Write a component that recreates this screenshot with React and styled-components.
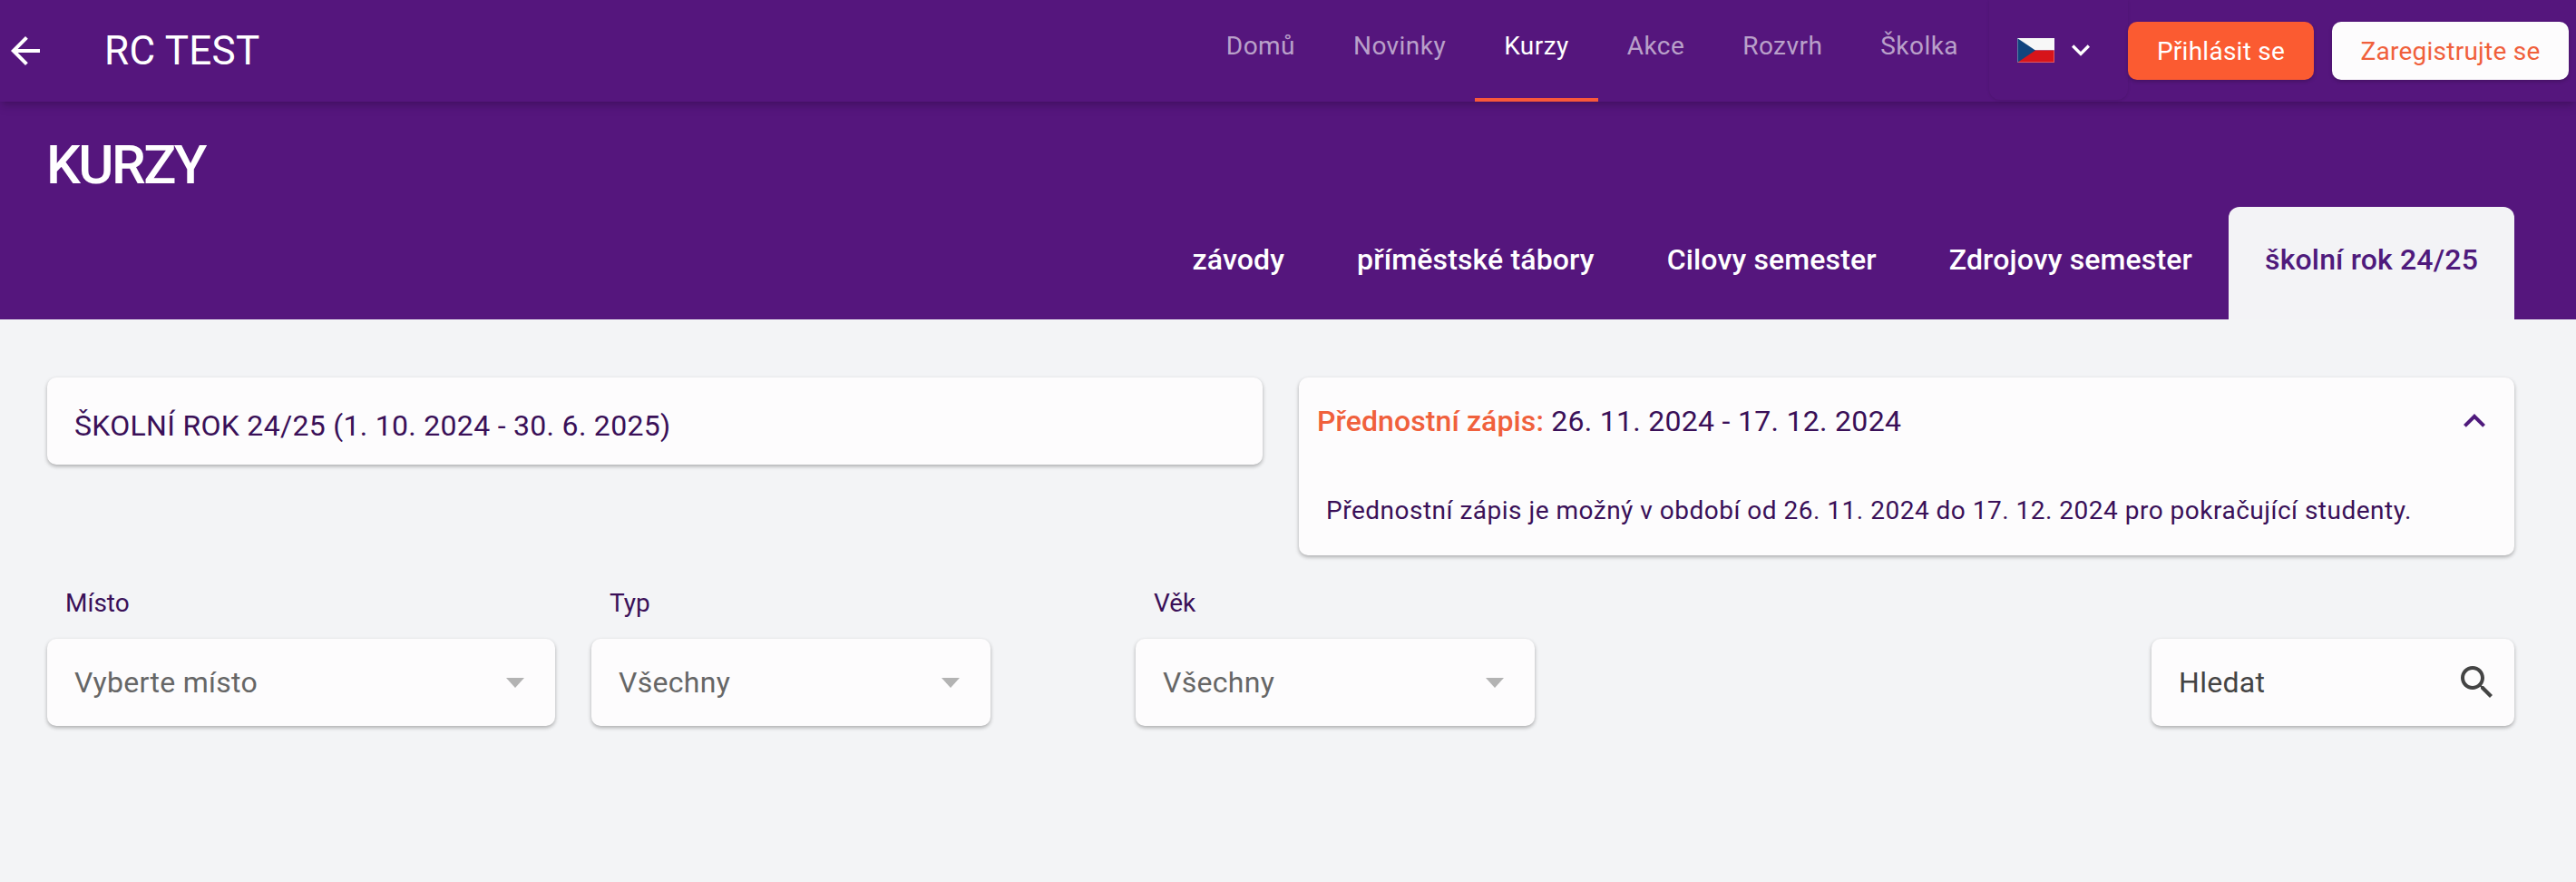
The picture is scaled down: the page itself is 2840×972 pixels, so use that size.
import React from "react";
import styled, { createGlobalStyle } from "styled-components";

const GlobalStyle = createGlobalStyle`
  html, body {
    margin: 0;
    padding: 0;
    background: #f3f4f6;
    font-family: Roboto, "Noto Sans", sans-serif;
  }
  * { box-sizing: border-box; }
`;

const Page = styled.div`
  min-height: 972px;
  background: #f3f4f6;
`;

const AppBar = styled.header`
  position: relative;
  z-index: 2;
  height: 112px;
  display: flex;
  align-items: stretch;
  justify-content: space-between;
  padding: 0 8px 0 4px;
  background: #55167d;
  box-shadow: 0 4px 8px -2px rgba(0, 0, 0, 0.2), 0 8px 10px 0 rgba(0, 0, 0, 0.06);
`;

const Brand = styled.div`
  display: flex;
  align-items: center;
  color: #fff;
`;

const BrandName = styled.span`
  margin-left: 63px;
  font-size: 44px;
  font-weight: 400;
  line-height: 1;
  letter-spacing: 0.3px;
`;

const Icon = styled.svg`
  display: block;
  flex: none;
  width: ${({ $size }) => $size}px;
  height: ${({ $size }) => $size}px;
  fill: ${({ $color }) => $color};
`;

const NavArea = styled.div`
  display: flex;
  align-items: stretch;
`;

const NavLink = styled.a`
  display: flex;
  align-items: center;
  padding: 0 32px 8px;
  font-size: 28px;
  letter-spacing: 0.45px;
  color: ${({ $active }) => ($active ? "#fff" : "rgba(255, 255, 255, 0.6)")};
  border-bottom: 4px solid ${({ $active }) => ($active ? "#f9583a" : "transparent")};
`;

const LangPicker = styled.div`
  width: 153px;
  height: 110px;
  margin-left: 2px;
  display: flex;
  align-items: center;
  padding-left: 31px;
  gap: 9px;
  border-radius: 0 0 12px 12px;
  box-shadow: 0 1px 3px rgba(0, 0, 0, 0.12);
`;

const Flag = styled.svg`
  display: block;
  width: 41px;
  height: 27px;
`;

const Actions = styled.div`
  display: flex;
  align-items: flex-start;
  gap: 20px;
  padding-top: 24px;
`;

const ActionButton = styled.button`
  height: 64px;
  width: ${({ $width }) => $width}px;
  padding: 0;
  border: 0;
  border-radius: 10px;
  font-family: inherit;
  font-size: 28px;
  letter-spacing: 0.25px;
  background: ${({ $filled }) => ($filled ? "#fb5b31" : "#fdfcfd")};
  color: ${({ $filled }) => ($filled ? "#fff" : "#f0603c")};
  box-shadow: 0 2px 4px rgba(0, 0, 0, 0.2);
`;

const Hero = styled.section`
  height: 240px;
  padding: 35px 68px 0 51px;
  display: flex;
  flex-direction: column;
  justify-content: space-between;
  background: #55167d;
`;

const PageTitle = styled.h1`
  margin: 0;
  font-size: 60px;
  font-weight: 500;
  line-height: 70px;
  letter-spacing: -2.6px;
  color: #fff;
`;

const Tabs = styled.nav`
  display: flex;
  justify-content: flex-end;
`;

const Tab = styled.a`
  height: 124px;
  padding: 0 40px 8px;
  display: flex;
  align-items: center;
  font-size: 32px;
  font-weight: 500;
  letter-spacing: 0.15px;
  border-radius: 12px 12px 0 0;
  color: ${({ $active }) => ($active ? "#4f1a7c" : "#fff")};
  background: ${({ $active }) => ($active ? "#f3f3f6" : "transparent")};
`;

const Content = styled.main`
  padding: 64px 68px 0 52px;
`;

const InfoRow = styled.div`
  display: grid;
  grid-template-columns: 1fr 1fr;
  gap: 40px;
  align-items: start;
`;

const Card = styled.div`
  background: #fdfcfd;
  border-radius: 10px;
  box-shadow: 0 2px 4px rgba(0, 0, 0, 0.3);
  color: #3a1058;
`;

const SeasonCard = styled(Card)`
  height: 96px;
  padding: 9px 30px 0;
  display: flex;
  align-items: center;
  font-size: 32px;
  letter-spacing: 0.3px;
`;

const AccordionHead = styled.div`
  height: 96px;
  padding: 0 20px;
  display: flex;
  align-items: center;
  justify-content: space-between;
  font-size: 32px;
  letter-spacing: 0.3px;
`;

const Highlight = styled.span`
  font-weight: 500;
  letter-spacing: 0.1px;
  color: #f0603c;
`;

const AccordionBody = styled.p`
  margin: 0;
  height: 100px;
  padding: 24px 30px 0;
  font-size: 28px;
  line-height: 54px;
  letter-spacing: 0.5px;
`;

const Filters = styled.div`
  margin-top: 34px;
  display: flex;
  align-items: flex-end;
  gap: 40px;
`;

const Field = styled.div`
  width: ${({ $width }) => $width}px;
  margin-left: ${({ $offset }) => $offset || 0}px;
`;

const FieldLabel = styled.label`
  display: block;
  height: 58px;
  padding: 0 20px;
  font-size: 28px;
  line-height: 38px;
  color: #3a1058;
`;

const Select = styled(Card)`
  height: 96px;
  padding: 0 34px 0 30px;
  display: flex;
  align-items: center;
  justify-content: space-between;
  font-size: 32px;
  letter-spacing: 0.3px;
  color: #666;
`;

const Caret = styled.span`
  width: 0;
  height: 0;
  border-left: 10px solid transparent;
  border-right: 10px solid transparent;
  border-top: 11px solid #b3b3b3;
`;

const SearchBox = styled(Card)`
  width: 400px;
  height: 96px;
  margin-left: auto;
  padding: 0 17px 0 30px;
  display: flex;
  align-items: center;
  justify-content: space-between;
  font-size: 32px;
  letter-spacing: 0.3px;
  color: #444;
`;

const navItems = ["Domů", "Novinky", "Kurzy", "Akce", "Rozvrh", "Školka"];
const tabItems = ["závody", "příměstské tábory", "Cilovy semester", "Zdrojovy semester", "školní rok 24/25"];
const filters = [
  { label: "Místo", value: "Vyberte místo", width: 560 },
  { label: "Typ", value: "Všechny", width: 440 },
  { label: "Věk", value: "Všechny", width: 440, offset: 120 },
];

export default function App() {
  return (
    <Page>
      <GlobalStyle />
      <AppBar>
        <Brand>
          <Icon $size={48} $color="#fff" viewBox="0 0 24 24">
            <path d="M20 11H7.83l5.59-5.59L12 4l-8 8 8 8 1.41-1.41L7.83 13H20v-2z" />
          </Icon>
          <BrandName>RC TEST</BrandName>
        </Brand>
        <NavArea>
          {navItems.map((item) => (
            <NavLink key={item} $active={item === "Kurzy"}>{item}</NavLink>
          ))}
          <LangPicker>
            <Flag viewBox="0 0 41 27">
              <rect width="41" height="13.5" fill="#f7f7f7" />
              <rect y="13.5" width="41" height="13.5" fill="#d7141a" />
              <path d="M0 0 L20 13.5 L0 27 Z" fill="#11457e" />
              <rect x="0.5" y="0.5" width="40" height="26" fill="none" stroke="#fff" strokeOpacity="0.3" />
            </Flag>
            <Icon $size={40} $color="#fff" viewBox="0 0 24 24">
              <path d="M16.59 8.59 12 13.17 7.41 8.59 6 10l6 6 6-6z" />
            </Icon>
          </LangPicker>
          <Actions>
            <ActionButton $filled $width={205}>Přihlásit se</ActionButton>
            <ActionButton $width={261}>Zaregistrujte se</ActionButton>
          </Actions>
        </NavArea>
      </AppBar>

      <Hero>
        <PageTitle>KURZY</PageTitle>
        <Tabs>
          {tabItems.map((item) => (
            <Tab key={item} $active={item === "školní rok 24/25"}>{item}</Tab>
          ))}
        </Tabs>
      </Hero>

      <Content>
        <InfoRow>
          <SeasonCard>ŠKOLNÍ ROK 24/25 (1. 10. 2024 - 30. 6. 2025)</SeasonCard>
          <Card>
            <AccordionHead>
              <span>
                <Highlight>Přednostní zápis:</Highlight> 26. 11. 2024 - 17. 12. 2024
              </span>
              <Icon $size={48} $color="#4f1a7c" viewBox="0 0 24 24">
                <path d="M12 8l-6 6 1.41 1.41L12 10.83l4.59 4.58L18 14z" />
              </Icon>
            </AccordionHead>
            <AccordionBody>
              Přednostní zápis je možný v období od 26. 11. 2024 do 17. 12. 2024 pro pokračující studenty.
            </AccordionBody>
          </Card>
        </InfoRow>

        <Filters>
          {filters.map((f) => (
            <Field key={f.label} $width={f.width} $offset={f.offset}>
              <FieldLabel>{f.label}</FieldLabel>
              <Select>
                {f.value}
                <Caret />
              </Select>
            </Field>
          ))}
          <SearchBox>
            Hledat
            <Icon $size={48} $color="#444" viewBox="0 0 24 24">
              <path d="M15.5 14h-.79l-.28-.27C15.41 12.59 16 11.11 16 9.5 16 5.91 13.09 3 9.5 3S3 5.91 3 9.5 5.91 16 9.5 16c1.61 0 3.09-.59 4.23-1.57l.27.28v.79l5 4.99L20.49 19l-4.99-5zm-6 0C7.01 14 5 11.99 5 9.5S7.01 5 9.5 5 14 7.01 14 9.5 11.99 14 9.5 14z" />
            </Icon>
          </SearchBox>
        </Filters>
      </Content>
    </Page>
  );
}
